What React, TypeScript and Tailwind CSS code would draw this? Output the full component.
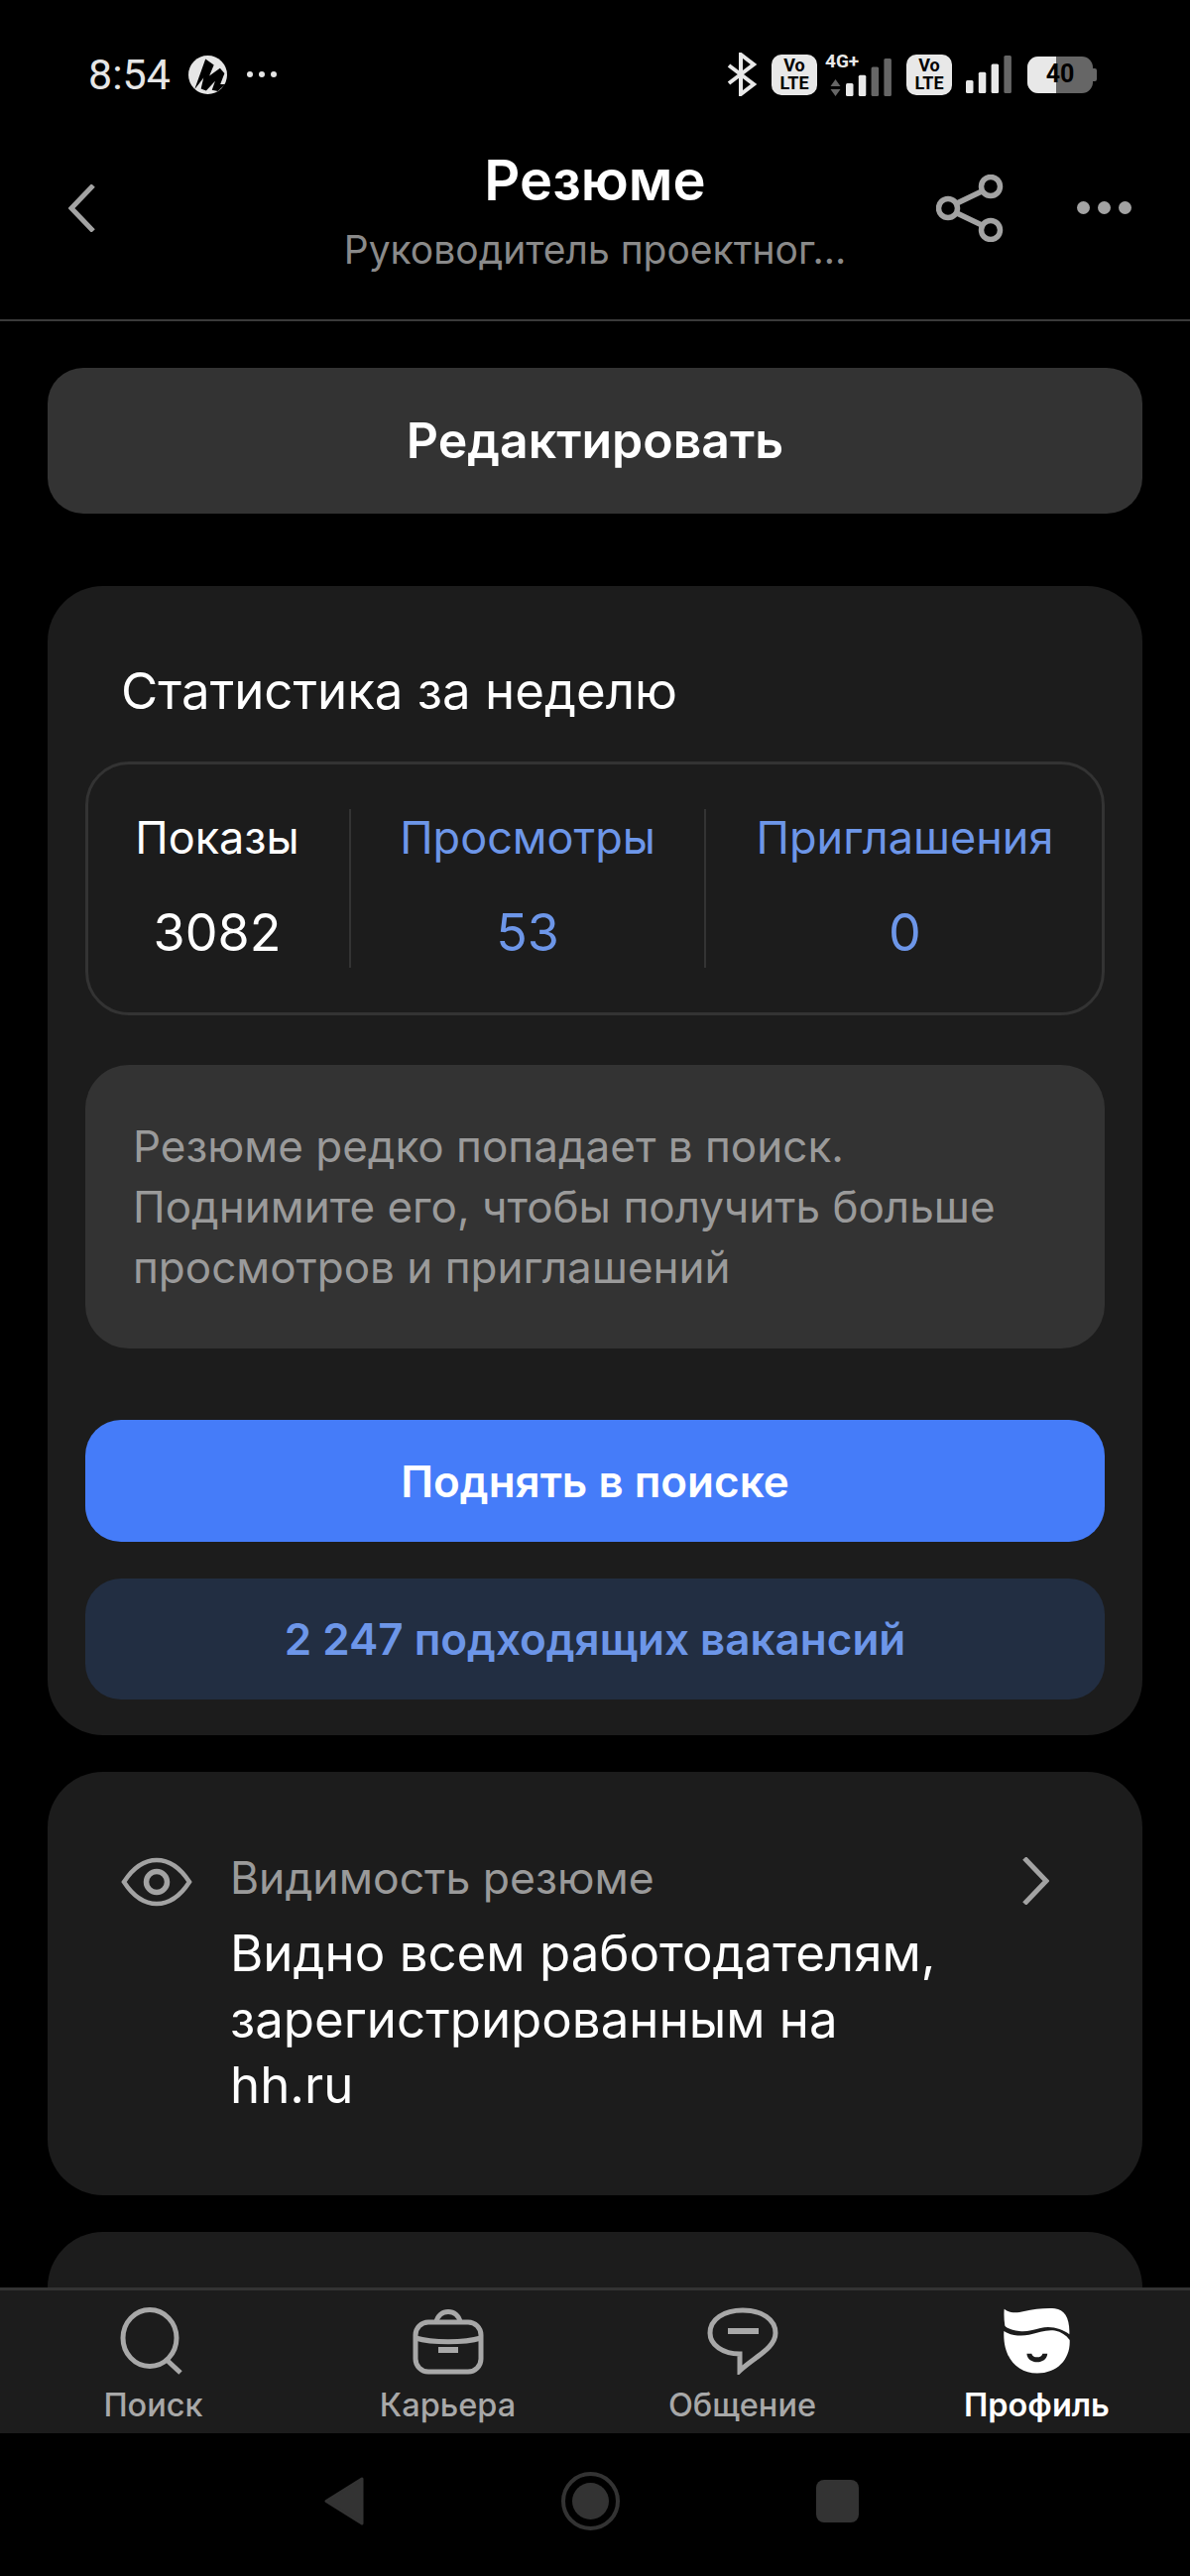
import React from 'react';

const VoLte = () => (
  <div className="w-[46px] h-[41px] rounded-[10px] bg-[#e8e8e8] flex flex-col items-center justify-center text-black font-bold text-[18px] leading-[18px] font-['Roboto',sans-serif]">
    <span>Vo</span>
    <span>LTE</span>
  </div>
);

const Signal = ({ dim }: { dim: number }) => (
  <svg width="46" height="38" viewBox="0 0 46 38">
    {[0, 1, 2, 3].map((i) => (
      <rect
        key={i}
        x={i * 12.8}
        y={25 - i * 8.3}
        width="7.5"
        height={13 + i * 8.3}
        rx="1.5"
        fill={i >= dim ? '#666' : '#e8e8e8'}
      />
    ))}
  </svg>
);

const StatusBar = () => (
  <div className="h-[150px] shrink-0 pt-[53px] pl-[89px] pr-[94px] flex items-start justify-between">
    <div className="flex items-center h-[44px] text-[#e6e6e6]">
      <span className="text-[43px] font-['Roboto',sans-serif] leading-none">8:54</span>
      <svg className="ml-[18px]" width="39" height="39" viewBox="27 15 120 120">
        <circle cx="87" cy="75" r="60" fill="#e6e6e6" />
        <path d="M46 120 L80 26 L106 44 L92 78 L125 54 L139 70 L126 104 L142 104 L118 126 L100 122 L110 94 L82 124 L66 118 L74 84 Z" fill="#000" />
      </svg>
      <div className="ml-[20px] flex gap-[6px]">
        <span className="w-[6px] h-[6px] rounded-full bg-[#e6e6e6]" />
        <span className="w-[6px] h-[6px] rounded-full bg-[#e6e6e6]" />
        <span className="w-[6px] h-[6px] rounded-full bg-[#e6e6e6]" />
      </div>
    </div>
    <div className="flex items-center h-[44px]">
      <svg width="30" height="44" viewBox="0 0 30 44" fill="none" stroke="#e8e8e8" strokeWidth="4">
        <path d="M2 13 L27 32 L14 42 L14 2 L27 12 L2 31" />
      </svg>
      <div className="ml-[15px]"><VoLte /></div>
      <div className="ml-[8px] relative w-[66px] h-[41px]">
        <span className="absolute left-0 top-[-3px] text-[19px] font-bold text-[#e8e8e8] font-['Roboto',sans-serif] leading-none">4G+</span>
        <svg className="absolute left-[5px] bottom-[-1px]" width="11" height="17" viewBox="0 0 11 17">
          <path d="M5.5 0 L10.5 7 L0.5 7 Z M5.5 17 L10.5 10 L0.5 10 Z" fill="#666" />
        </svg>
        <div className="absolute left-[21px] bottom-[-1px]"><Signal dim={2} /></div>
      </div>
      <div className="ml-[16px]"><VoLte /></div>
      <div className="ml-[14px]"><Signal dim={3} /></div>
      <div className="ml-[16px] flex items-center">
        <div className="w-[66px] h-[37px] rounded-[11px] overflow-hidden flex relative bg-[#666]">
          <div className="w-[29px] bg-[#e8e8e8]" />
          <span className="absolute inset-0 flex items-center justify-center text-black font-bold text-[25px] font-['Roboto',sans-serif]">40</span>
        </div>
        <div className="w-[4px] h-[13px] bg-[#666] rounded-r-[2px]" />
      </div>
    </div>
  </div>
);

const Header = () => (
  <div className="h-[174px] shrink-0 border-b-[2px] border-[#3a3a3a] grid grid-cols-[1fr_auto_1fr] items-start px-[59px]">
    <svg className="mt-[36px] ml-[10px]" width="27" height="48" viewBox="0 0 27 48" fill="none">
      <path d="M25 1 L3 24 L25 47" stroke="#a3a3a3" strokeWidth="5" />
    </svg>
    <div className="flex flex-col items-center">
      <div className="text-[56px] font-semibold text-white leading-[64px]">Резюме</div>
      <div className="text-[39px] text-[#8a8a8a] leading-[46px] mt-[15px]">Руководитель проектног...</div>
    </div>
    <div className="flex justify-end items-start">
      <svg className="mt-[26px]" width="68" height="68" viewBox="0 0 68 68" fill="none" stroke="#a3a3a3" strokeWidth="5.5">
        <circle cx="12" cy="34" r="9.5" />
        <circle cx="55" cy="12" r="9.5" />
        <circle cx="55" cy="56" r="9.5" />
        <path d="M21 29 L46 17 M21 39 L46 51" />
      </svg>
      <div className="ml-[74px] mt-[53px] flex gap-[8px]">
        <span className="w-[13px] h-[13px] rounded-full bg-[#a3a3a3]" />
        <span className="w-[13px] h-[13px] rounded-full bg-[#a3a3a3]" />
        <span className="w-[13px] h-[13px] rounded-full bg-[#a3a3a3]" />
      </div>
    </div>
  </div>
);

const Stat = ({ label, value, blue, className }: { label: string; value: string; blue?: boolean; className: string }) => (
  <div className={`flex flex-col items-center justify-center ${className} ${blue ? 'text-[#6d96e8]' : 'text-white'}`}>
    <div className="text-[45px] leading-[50px] mt-[-2px]">{label}</div>
    <div className="text-[52px] leading-[58px] mt-[42px]">{value}</div>
  </div>
);

const StatsCard = () => (
  <div className="mt-[73px] rounded-[56px] bg-[#1c1c1c] px-[38px] pt-[72px] pb-[36px]">
    <div className="pl-[36px] text-[51px] leading-[68px] text-white">Статистика за неделю</div>
    <div className="mt-[37px] h-[256px] rounded-[44px] border-[3px] border-[#333] flex items-center">
      <Stat label="Показы" value="3082" className="w-[265px] h-[160px] pr-[3px] border-r-[2px] border-[#333]" />
      <Stat label="Просмотры" value="53" blue className="w-[358px] h-[160px] border-r-[2px] border-[#333]" />
      <Stat label="Приглашения" value="0" blue className="flex-1 h-[160px] pl-[2px]" />
    </div>
    <div className="mt-[50px] h-[286px] rounded-[44px] bg-[#333] px-[48px] flex items-center">
      <p className="text-[44px] leading-[61px] text-[#9a9a9a]">
        Резюме редко попадает в поиск.<br />
        Поднимите его, чтобы получить больше<br />
        просмотров и приглашений
      </p>
    </div>
    <div className="mt-[72px] h-[123px] rounded-[36px] bg-[#457cf9] flex items-center justify-center text-[44px] font-semibold text-white">
      Поднять в поиске
    </div>
    <div className="mt-[37px] h-[122px] rounded-[36px] bg-[#222e42] flex items-center justify-center text-[44px] font-semibold text-[#6d96e8]">
      2 247 подходящих вакансий
    </div>
  </div>
);

const VisibilityCard = () => (
  <div className="mt-[37px] rounded-[56px] bg-[#1c1c1c] h-[427px] pl-[74px] pr-[94px] pt-[79px] flex items-start">
    <svg className="shrink-0 mt-[7px]" width="72" height="50" viewBox="0 0 72 50" fill="none" stroke="#a3a3a3" strokeWidth="4.5">
      <path d="M3 25 C14 8 25 3 36 3 C47 3 58 8 69 25 C58 42 47 47 36 47 C25 47 14 42 3 25 Z" />
      <circle cx="36" cy="25" r="10.5" strokeWidth="5.5" />
    </svg>
    <div className="ml-[38px] flex-1">
      <div className="text-[44.5px] leading-[56px] text-[#9a9a9a]">Видимость резюме</div>
      <div className="mt-[15px] text-[51px] leading-[66.5px] text-white">
        Видно всем работодателям,<br />
        зарегистрированным на<br />
        hh.ru
      </div>
    </div>
    <svg className="shrink-0 mt-[7px]" width="27" height="48" viewBox="0 0 27 48" fill="none">
      <path d="M2 1 L24 24 L2 47" stroke="#a3a3a3" strokeWidth="5" />
    </svg>
  </div>
);

const NavItem = ({ label, active, children }: { label: string; active?: boolean; children: React.ReactNode }) => (
  <div className="w-[297px] flex flex-col items-center">
    <div className="h-[68px] flex items-center justify-center">{children}</div>
    <div className={`mt-[11px] text-[32.5px] leading-[40px] ${active ? 'text-white font-semibold' : 'text-[#a8a8a8] font-medium'}`}>{label}</div>
  </div>
);

const BottomNav = () => (
  <div className="h-[147px] shrink-0 bg-[#1c1c1c] border-t-[3px] border-[#333] pt-[17px] flex justify-between px-[6px]">
    <NavItem label="Поиск">
      <svg width="68" height="68" viewBox="0 0 68 68" fill="none" stroke="#a8a8a8" strokeWidth="5">
        <ellipse cx="30" cy="31" rx="27" ry="28.5" />
        <path d="M47 53 L61 66" />
      </svg>
    </NavItem>
    <NavItem label="Карьера">
      <svg width="72" height="68" viewBox="0 0 72 68" fill="none" stroke="#a8a8a8" strokeWidth="5">
        <path d="M24 15 C26 1 46 1 48 15" />
        <rect x="3" y="15" width="66" height="50" rx="13" />
        <path d="M3 31 C20 36 52 36 69 31" />
        <path d="M26 43 H46" strokeWidth="6" />
      </svg>
    </NavItem>
    <NavItem label="Общение">
      <svg width="72" height="68" viewBox="0 0 72 68" fill="none" stroke="#a8a8a8" strokeWidth="5">
        <path d="M36 3 C55 3 69 12 69 26 C69 41 48 50 33 64 L33 47 C16 47 3 38 3 26 C3 12 17 3 36 3 Z" />
        <path d="M21 24 H52" strokeWidth="6" />
      </svg>
    </NavItem>
    <NavItem label="Профиль" active>
      <svg width="67" height="68" viewBox="36 14 206 204" fill="#fff">
        <path d="M38 17 C55 30 75 30 100 24 C130 17 165 13 195 15 C225 18 242 45 240 95 C215 78 185 68 150 76 C125 82 105 88 85 85 C62 82 45 76 40 68 C37 50 37 32 38 17 Z" />
        <path fillRule="evenodd" d="M37 85 C55 97 85 103 115 97 C145 90 170 80 195 84 C215 88 230 98 241 113 C244 170 205 216 140 216 C80 216 33 170 37 85 Z M108 155 C110 190 170 190 172 155 L157 155 C155 170 125 170 123 155 Z" />
      </svg>
    </NavItem>
  </div>
);

const SystemNav = () => (
  <div className="h-[144px] shrink-0 flex items-start pt-[39px] pl-[327px]">
    <svg className="mt-[5px]" width="40" height="49" viewBox="0 0 40 49">
      <path d="M38 2 L38 47 L2 24.5 Z" fill="#333" stroke="#333" strokeWidth="3" strokeLinejoin="round" />
    </svg>
    <div className="ml-[199px] w-[59px] h-[59px] rounded-full border-[4px] border-[#333] flex items-center justify-center">
      <div className="w-[37px] h-[37px] rounded-full bg-[#333]" />
    </div>
    <div className="ml-[198px] mt-[8px] w-[43px] h-[43px] rounded-[8px] bg-[#333]" />
  </div>
);

export default function App() {
  return (
    <div className="w-[1200px] h-[2598px] bg-black flex flex-col overflow-hidden font-['Inter',sans-serif]">
      <StatusBar />
      <Header />
      <div className="flex-1 min-h-0 overflow-hidden px-[48px] pt-[47px]">
        <div className="h-[147px] rounded-[36px] bg-[#333] flex items-center justify-center text-[50px] font-semibold text-white">
          Редактировать
        </div>
        <StatsCard />
        <VisibilityCard />
        <div className="mt-[37px] h-[300px] rounded-[56px] bg-[#1c1c1c]" />
      </div>
      <BottomNav />
      <SystemNav />
    </div>
  );
}
